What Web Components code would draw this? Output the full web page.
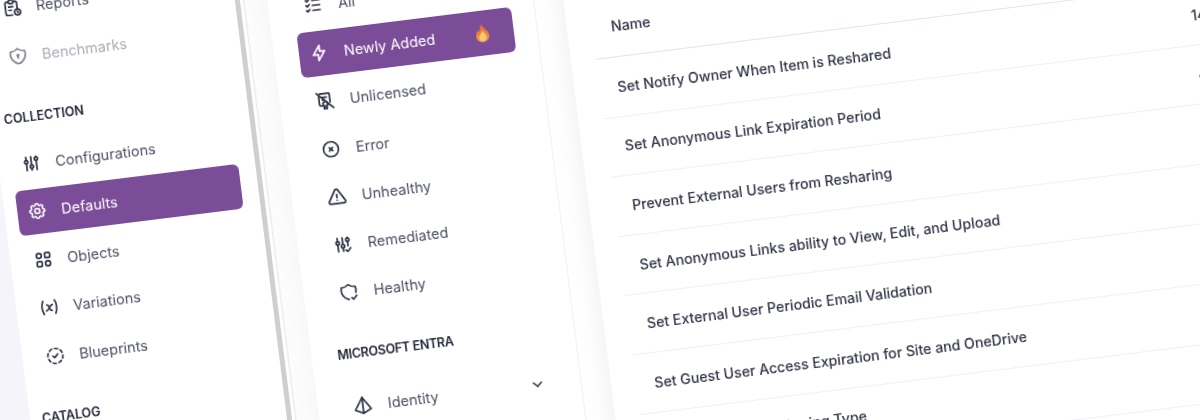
<!DOCTYPE html>
<html>
<head>
<meta charset="utf-8">
<style>
html,body{margin:0;padding:0;background:#f4f4fa;}
</style>
</head>
<body>
<app-stage>
  <side-panel class="first">
    <nav-item icon="report">Reports</nav-item>
    <nav-item icon="shieldlock" muted>Benchmarks</nav-item>
    <nav-head class="collection">COLLECTION</nav-head>
    <nav-item icon="sliders">Configurations</nav-item>
    <nav-item icon="gear" active>Defaults</nav-item>
    <nav-item icon="objects">Objects</nav-item>
    <nav-item icon="variable">Variations</nav-item>
    <nav-item icon="dashcheck">Blueprints</nav-item>
    <nav-head class="catalog">CATALOG</nav-head>
  </side-panel>
  <panel-gap class="a"></panel-gap>
  <side-panel class="second">
    <nav-item icon="listcheck">All</nav-item>
    <nav-item icon="bolt" active flame>Newly Added</nav-item>
    <nav-item icon="certoff">Unlicensed</nav-item>
    <nav-item icon="circlex">Error</nav-item>
    <nav-item icon="alert">Unhealthy</nav-item>
    <nav-item icon="sliderscheck">Remediated</nav-item>
    <nav-item icon="shieldcheck">Healthy</nav-item>
    <nav-head class="entra">MICROSOFT ENTRA</nav-head>
    <nav-item icon="pyramid" chevron>Identity</nav-item>
  </side-panel>
  <panel-gap class="b"></panel-gap>
  <policy-table>
    <policy-row head count="">Name</policy-row>
    <policy-row count="14">Set Notify Owner When Item is Reshared</policy-row>
    <policy-row count="4">Set Anonymous Link Expiration Period</policy-row>
    <policy-row>Prevent External Users from Resharing</policy-row>
    <policy-row>Set Anonymous Links ability to View, Edit, and Upload</policy-row>
    <policy-row>Set External User Periodic Email Validation</policy-row>
    <policy-row>Set Guest User Access Expiration for Site and OneDrive</policy-row>
    <policy-row>Set External Link Sharing Type</policy-row>
  </policy-table>
</app-stage>

<script>
const ICONS={
  report:'<path d="M8 5H6a2 2 0 0 0-2 2v12a2 2 0 0 0 2 2h5.7"/><path d="M18 14V7a2 2 0 0 0-2-2h-2"/><rect x="8" y="3" width="6" height="4" rx="2"/><circle cx="18" cy="18" r="3.6"/><path d="M18 16.5V18l.8.8"/><path d="M8 11h5M8 15h3"/>',
  shieldlock:'<path d="M12 3a12 12 0 0 0 8.5 3A12 12 0 0 1 12 21 12 12 0 0 1 3.5 6 12 12 0 0 0 12 3"/><circle cx="12" cy="11" r="1"/><path d="M12 12v2.5"/>',
  sliders:'<circle cx="6" cy="10" r="2"/><path d="M6 4v4M6 12v8"/><circle cx="12" cy="16" r="2"/><path d="M12 4v10M12 18v2"/><circle cx="18" cy="7" r="2"/><path d="M18 4v1M18 9v11"/>',
  gear:'<path d="M10.3 4.3c.4-1.8 3-1.8 3.4 0a1.7 1.7 0 0 0 2.6 1.1c1.5-.9 3.3.8 2.4 2.4a1.7 1.7 0 0 0 1 2.5c1.8.4 1.8 3 0 3.4a1.7 1.7 0 0 0-1 2.6c.9 1.5-.9 3.3-2.4 2.4a1.7 1.7 0 0 0-2.6 1c-.4 1.8-3 1.8-3.4 0a1.7 1.7 0 0 0-2.6-1c-1.5.9-3.3-.9-2.4-2.4a1.7 1.7 0 0 0-1-2.6c-1.8-.4-1.8-3 0-3.4a1.7 1.7 0 0 0 1-2.5c-.9-1.6.9-3.3 2.4-2.4 1 .6 2.3.1 2.6-1.1z"/><circle cx="12" cy="12" r="3"/>',
  objects:'<circle cx="7" cy="7" r="3"/><rect x="14" y="4" width="6" height="6" rx="1"/><rect x="4" y="14" width="6" height="6" rx="1"/><circle cx="17" cy="17" r="3"/>',
  variable:'<path d="M5 4c-2.5 5-2.5 10 0 16"/><path d="M19 4c2.5 5 2.5 10 0 16"/><path d="M9 9h1c1 0 1 1 2 3.5s1 3.5 2 3.5h1"/><path d="M8 16c1.500 0 3-2 4-3.500S14.500 9 16 9"/>',
  dashcheck:'<path d="M8.56 3.69a9 9 0 0 0-2.92 1.95"/><path d="M3.69 8.56A9 9 0 0 0 3 12"/><path d="M3.69 15.44a9 9 0 0 0 1.95 2.92"/><path d="M8.56 20.31A9 9 0 0 0 12 21"/><path d="M15.44 20.31a9 9 0 0 0 2.92-1.95"/><path d="M20.31 15.44A9 9 0 0 0 21 12"/><path d="M20.31 8.56a9 9 0 0 0-1.950-2.920"/><path d="M15.44 3.69A9 9 0 0 0 12 3"/><path d="M9 12l2 2 4-4"/>',
  listcheck:'<path d="M3.500 5.500l1.500 1.500 2.500-2.500"/><path d="M3.500 11.500l1.500 1.500 2.500-2.500"/><path d="M3.500 17.500l1.500 1.500 2.500-2.500"/><path d="M11 6h9M11 12h9M11 18h9"/>',
  bolt:'<path d="M13 3v7h6l-8 11v-7H5l8-11"/>',
  certoff:'<path d="M6 3.500h11a1 1 0 0 1 1 1v10M5 7v9a2 2 0 0 0 2 2h1"/><path d="M9 8h5M9 11h2"/><circle cx="12" cy="16" r="2.800"/><path d="M10.300 18.500V22l1.700-1 1.700 1v-3.500"/><path d="M2.500 2.500l19 19"/>',
  circlex:'<circle cx="12" cy="12" r="9"/><path d="M10 10l4 4M14 10l-4 4"/>',
  alert:'<path d="M12 9v4"/><path d="M10.363 3.591l-8.106 13.534a1.914 1.914 0 0 0 1.636 2.871h16.214a1.914 1.914 0 0 0 1.636-2.870l-8.106-13.536a1.914 1.914 0 0 0-3.274 0z"/><path d="M12 16h.01"/>',
  sliderscheck:'<circle cx="6" cy="10" r="2"/><path d="M6 4v4M6 12v8"/><circle cx="12" cy="14" r="2"/><path d="M12 4v8M12 16v4"/><circle cx="18" cy="7" r="2"/><path d="M18 4v1M18 9v5"/><path d="M15 19l2 2 4-4"/>',
  shieldcheck:'<path d="M11.460 20.846a12 12 0 0 1-7.960-14.846 12 12 0 0 0 8.500-3 12 12 0 0 0 8.500 3 12 12 0 0 1-.090 7.060"/><path d="M15 19l2 2 4-4"/>',
  pyramid:'<path d="M12 2.500L2.500 17 12 21.500 21.500 17z"/><path d="M12 2.500v19"/>'
};

const navItemTpl=document.createElement("template");
navItemTpl.innerHTML=`
<style>
:host{
    display:flex;
    align-items:center;
    height:45px;
    margin-bottom:var(--item-gap,3.5px);
    padding:0 11px 0 var(--text-left,44px);
    box-sizing:border-box;
    border-radius:6px;
    color:#4b5064;
    font:400 14.5px "Inter","Noto Sans",sans-serif;
    position:relative;
    white-space:nowrap;
}
:host([active]){background:#7b4c97;color:#fff;}
:host([muted]){color:#aaabb6;}
svg.ic{
    position:absolute;
    left:10px;
    top:12px;
    width:20px;
    height:20px;
    fill:none;
    stroke:#2b3042;
    stroke-width:2;
    stroke-linecap:round;
    stroke-linejoin:round;
}
:host([active]) svg.ic{stroke:#fff;}
:host([muted]) svg.ic{stroke:#85868f;}
.end{margin-left:auto;display:flex;}
.flame{width:15px;height:19px;margin-right:13px;margin-top:0;}
.chev{width:16px;height:16px;fill:none;stroke:#2b3042;stroke-width:2.200;stroke-linecap:round;stroke-linejoin:round;margin-right:1px;}
</style>
<svg class="ic" viewBox="0 0 24 24"></svg>
<slot></slot>
<span class="end"></span>
`;

class NavItem extends HTMLElement{
    constructor(){
        super();
        this.attachShadow({mode:'open'});
        this.shadowRoot.appendChild(navItemTpl.content.cloneNode(true));
    }
    connectedCallback(){
        this.shadowRoot.querySelector('.ic').innerHTML=ICONS[this.getAttribute('icon')]||'';
        const end=this.shadowRoot.querySelector('.end');
        if(this.hasAttribute('flame')){
            end.innerHTML=`<svg class="flame" viewBox="0 0 16 19"><defs><linearGradient id="fl" x1="0" y1="0" x2="0" y2="1"><stop offset="0" stop-color="#e2683a"/><stop offset="1" stop-color="#f0a040"/></linearGradient></defs><path fill="url(#fl)" d="M8 0c.6 2.600 2 3.600 3.600 5.600C13.200 7.600 15 9.400 15 12.400 15 16.200 12 19 8 19s-7-2.800-7-6.400C1 9.600 2.700 8.200 3.800 5.800c.5 1 .8 1.700 1.400 2.200C5.500 5 6.400 2.200 8 0z"/><path fill="#f6c877" d="M8.200 6.500c.6 2 2.600 3.500 3.400 5.400.9 2.500-.4 6.200-3.600 6.400-3.200-.2-4.500-3.300-3.400-5.900C5.400 10.500 7.700 9 8.200 6.500z"/></svg>`;
        }
        if(this.hasAttribute('chevron')){
            end.innerHTML=`<svg class="chev" viewBox="0 0 24 24"><path d="M6 9l6 6 6-6"/></svg>`;
        }
    }
}
window.customElements.define("nav-item",NavItem);

class NavHead extends HTMLElement{
    constructor(){
        super();
        this.attachShadow({mode:'open'});
        this.shadowRoot.innerHTML=`
<style>
:host{
    display:block;
    height:20px;
    margin:23px 0 16.5px 0;
    color:#222738;
    font:600 12.5px/20px "Inter","Noto Sans",sans-serif;
    white-space:nowrap;
}
:host(.collection){margin:29px 0 14px -1.5px;}
:host(.catalog){margin:28px 0 16.5px -.5px;}
:host(.entra){margin:28.500px 0 20.500px 1px;letter-spacing:-.28px;}
</style>
<slot></slot>`;
    }
}
window.customElements.define("nav-head",NavHead);

class SidePanel extends HTMLElement{
    constructor(){
        super();
        this.attachShadow({mode:'open'});
        this.shadowRoot.innerHTML=`
<style>
:host{
    display:block;
    box-sizing:border-box;
    background:#fff;
    flex:none;
}
:host(.first){
    width:260px;
    padding:27px 17.500px 0 12.500px;
    border-right:5px solid #cfcfcf;
    --text-left:44.500px;
}
:host(.second){
    width:265px;
    padding:62px 23px 0 25px;
    border-right:1px solid #f0f1f3;
    --text-left:45px;
    --item-gap:3.200px;
}
</style>
<slot></slot>`;
    }
}
window.customElements.define("side-panel",SidePanel);

class PanelGap extends HTMLElement{
    constructor(){
        super();
        this.attachShadow({mode:'open'});
        this.shadowRoot.innerHTML=`
<style>
:host{display:block;flex:none;}
:host(.a){width:27px;background:linear-gradient(90deg,#fff 0,#fff 3px,#ececec 3px,#ececec 4px,#fdfdfd 5px,#f8f8f8 100%);}
:host(.b){width:29px;background:linear-gradient(90deg,#fff 0,#fafafa 100%);}
</style>`;
    }
}
window.customElements.define("panel-gap",PanelGap);

class PolicyRow extends HTMLElement{
    constructor(){
        super();
        this.attachShadow({mode:'open'});
        this.shadowRoot.innerHTML=`
<style>
:host{
    display:grid;
    grid-template-columns:1fr 104px;
    align-items:center;
    height:59.600px;
    padding-left:18px;
    box-sizing:border-box;
    border-bottom:1px solid #edf0f5;
    color:#2f3445;
    font:500 14.180px "Inter","Noto Sans",sans-serif;
    white-space:nowrap;
}
:host([head]){
    height:68px;
    border-bottom:1.500px solid #dfe5ec;
    padding:5px 0 0 19px;
}
</style>
<div><slot></slot></div>
<div id="n"></div>`;
    }
    connectedCallback(){
        this.shadowRoot.querySelector('#n').innerText=this.getAttribute('count')||'';
    }
}
window.customElements.define("policy-row",PolicyRow);

class PolicyTable extends HTMLElement{
    constructor(){
        super();
        this.attachShadow({mode:'open'});
        this.shadowRoot.innerHTML=`
<style>
:host{
    display:block;
    flex:none;
    width:800px;
    box-sizing:border-box;
    padding:105px 0 0 25px;
    background:#fff;
    box-shadow:-6px 0 14px rgba(40,40,70,.025);
}
.t{width:700px;}
</style>
<div class="t"><slot></slot></div>`;
    }
}
window.customElements.define("policy-table",PolicyTable);

class AppStage extends HTMLElement{
    constructor(){
        super();
        this.attachShadow({mode:'open'});
        this.shadowRoot.innerHTML=`
<style>
:host{
    display:block;
    width:1200px;
    height:420px;
    overflow:hidden;
    background:#f4f4fa;
}
.app{
    display:flex;
    width:1400px;
    height:800px;
    transform-origin:0 0;
    transform:rotate(-7.1deg) translate(-22px,-40px);
    filter:blur(.3px);
}
</style>
<div class="app"><slot></slot></div>`;
    }
}
window.customElements.define("app-stage",AppStage);
</script>
</body>
</html>
